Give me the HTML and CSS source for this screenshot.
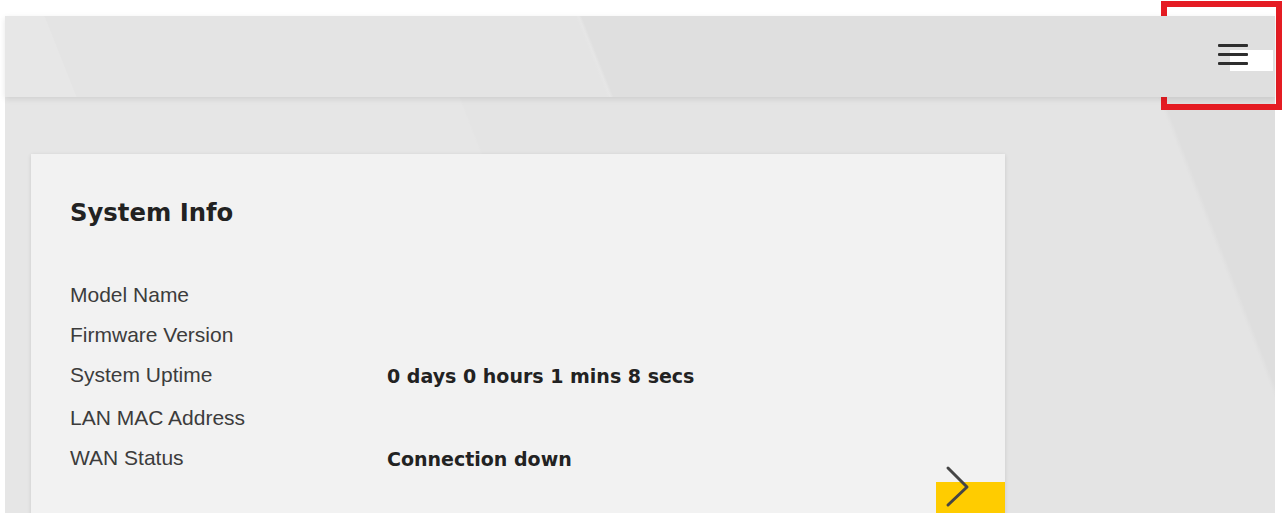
FILE: index.html
```html
<!DOCTYPE html>
<html lang="en">
<head>
<meta charset="utf-8">
<title>System Info</title>
<link rel="stylesheet" href="styles.css">
</head>
<body>
<div class="app">
  <header class="topbar">
    <span class="redact"></span>
    <button class="menu-btn" aria-label="Menu"><span></span><span></span><span></span></button>
  </header>
  <main class="main">
    <section class="card">
      <h2 class="card-title">System Info</h2>
      <dl class="info">
        <div class="row"><dt>Model Name</dt><dd></dd></div>
        <div class="row"><dt>Firmware Version</dt><dd></dd></div>
        <div class="row"><dt>System Uptime</dt><dd>0 days 0 hours 1 mins 8 secs</dd></div>
        <div class="row row-gap"><dt>LAN MAC Address</dt><dd></dd></div>
        <div class="row"><dt>WAN Status</dt><dd>Connection down</dd></div>
      </dl>
      <a class="more-btn" href="#" aria-label="More">
        <svg viewBox="0 0 40 50" width="40" height="50"><polyline points="12,6 31,25 12,43" fill="none" stroke="#454545" stroke-width="3" stroke-linecap="round" stroke-linejoin="round"/></svg>
      </a>
    </section>
  </main>
</div>
<div class="highlight"></div>
</body>
</html>
```
FILE: styles.css
```css
* { box-sizing: border-box; }
html, body {
  margin: 0;
  height: 513px;
  overflow: hidden;
  background: #ffffff;
}
body {
  position: relative;
  font-family: "Liberation Sans", Arial, sans-serif;
}
.app {
  margin: 16px 0 0 5px;
  width: 1270px;
  height: 497px;
  display: flex;
  flex-direction: column;
  background: #e4e4e4;
}
.topbar {
  flex: none;
  height: 81px;
  position: relative;
  z-index: 1;
  display: flex;
  justify-content: flex-end;
  align-items: center;
  padding-right: 27px;
  background: linear-gradient(68.4deg, #e7e7e7 0 66px, #e4e4e4 67px 560px, #e6e6e6 563px, #dfdfdf 566px);
  box-shadow: 0 2px 6px rgba(0, 0, 0, 0.10);
}
.redact {
  position: absolute;
  left: 1225px;
  top: 34px;
  width: 43px;
  height: 21px;
  background: #ffffff;
}
.menu-btn {
  position: relative;
  z-index: 1;
  width: 30px;
  height: 21px;
  margin-bottom: 4px;
  padding: 0;
  border: 0;
  background: none;
  display: flex;
  flex-direction: column;
  justify-content: space-between;
}
.menu-btn span {
  display: block;
  height: 3px;
  border-radius: 1px;
  background: #2e2e2e;
}
.main {
  flex: 1;
  padding: 57px 0 0 26px;
  background: linear-gradient(68.8deg, #e6e6e6 0 588px, #e4e4e4 590px 1240px, #e2e2e2 1242px, #dedede 1245px);
}
.card {
  position: relative;
  width: 974px;
  height: 400px;
  padding: 44px 39px 0;
  background: #f2f2f2;
  box-shadow: 0 1px 4px rgba(0, 0, 0, 0.12);
}
.card-title {
  margin: 0 0 47px;
  font: bold 24.3px/30px "DejaVu Sans", sans-serif;
  color: #222222;
}
.info { margin: 0; }
.row {
  display: grid;
  grid-template-columns: 317px 1fr;
  height: 40px;
}
.row-gap { margin-top: 3px; }
.row dt {
  font: 21px/40px "Liberation Sans", Arial, sans-serif;
  color: #3c3c3c;
}
.row dd {
  margin: 0;
  padding-top: 1px;
  font: bold 19px/40px "DejaVu Sans", sans-serif;
  color: #222222;
}
.more-btn {
  position: absolute;
  right: 0;
  top: 328px;
  width: 69px;
  height: 72px;
  background: #ffcc00;
}
.more-btn svg {
  position: absolute;
  left: 0;
  top: -20px;
  overflow: visible;
}
.highlight {
  position: absolute;
  left: 1161px;
  top: 1px;
  width: 121px;
  height: 109px;
  border: 6px solid #e51c23;
}
```
